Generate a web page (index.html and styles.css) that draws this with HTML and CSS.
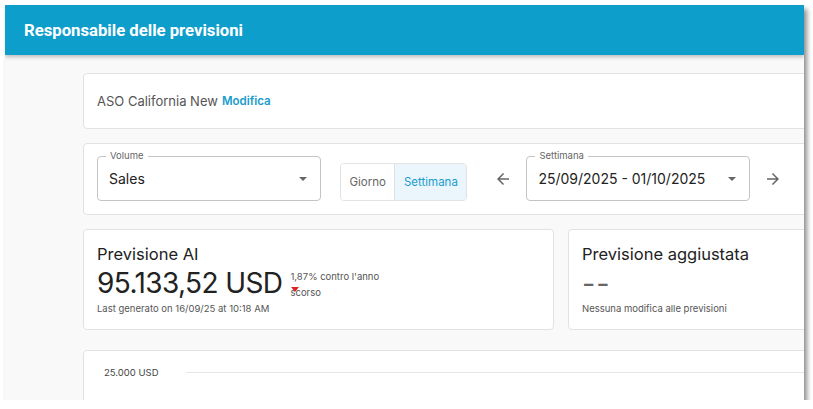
FILE: index.html
```html
<!DOCTYPE html>
<html lang="it">
  <head>
    <meta charset="UTF-8" />
    <meta name="viewport" content="width=device-width, initial-scale=1.0" />
    <title>Responsabile delle previsioni</title>
    <link rel="stylesheet" href="styles.css">
  </head>
  <body>
    <div class="window">
      <header>
        <h1>Responsabile delle previsioni</h1>
      </header>
      <div class="main">
        <div class="card app-card">
          <span class="app-name">ASO California New</span>
          <a class="edit-link" href="#">Modifica</a>
        </div>

        <div class="card filters">
          <div class="field">
            <span class="field-label">Volume</span>
            <span class="field-value">Sales</span>
            <span class="caret"></span>
          </div>
          <div class="toggle">
            <button class="toggle-btn">Giorno</button>
            <button class="toggle-btn active">Settimana</button>
          </div>
          <button class="arrow-btn">
            <svg width="18" height="18" viewBox="0 0 24 24"><path d="M20 11H7.83l5.59-5.59L12 4l-8 8 8 8 1.41-1.41L7.83 13H20v-2z" fill="#666"/></svg>
          </button>
          <div class="field">
            <span class="field-label">Settimana</span>
            <span class="field-value">25/09/2025 - 01/10/2025</span>
            <span class="caret"></span>
          </div>
          <button class="arrow-btn">
            <svg width="18" height="18" viewBox="0 0 24 24"><path d="M12 4l-1.41 1.41L16.17 11H4v2h12.17l-5.58 5.59L12 20l8-8z" fill="#666"/></svg>
          </button>
        </div>

        <div class="stats">
          <div class="card stat">
            <h2>Previsione AI</h2>
            <div class="stat-row">
              <span class="stat-value">95.133,52 USD</span>
              <span class="stat-change">
                1,87% contro l'anno scorso
                <span class="down"></span>
              </span>
            </div>
            <p class="stat-note">Last generato on 16/09/25 at 10:18 AM</p>
          </div>
          <div class="card stat">
            <h2>Previsione aggiustata</h2>
            <div class="stat-row">
              <span class="stat-empty">--</span>
            </div>
            <p class="stat-note">Nessuna modifica alle previsioni</p>
          </div>
        </div>

        <div class="card chart">
          <div class="grid-line">
            <span>25.000 USD</span>
            <div class="line"></div>
          </div>
        </div>
      </div>
    </div>
  </body>
</html>
```

FILE: styles.css
```css
body {
  margin: 0;
  padding: 0;
  background: #fff;
  font-family: Inter, "Noto Sans", sans-serif;
  color: #222;
}
.window {
  margin: 5px 0 0 5px;
  width: 799px;
  height: 395px;
  overflow: hidden;
  background: #f9f9f9;
  box-shadow: 3px 4px 5px rgba(0, 0, 0, 0.45);
}
header {
  height: 50px;
  background: #0e9ecb;
  display: flex;
  align-items: center;
  padding-left: 19px;
  box-shadow: 0 2px 4px rgba(0, 0, 0, 0.25);
  position: relative;
}
header h1 {
  margin: 0;
  color: #fff;
  font-family: Roboto, sans-serif;
  font-size: 16.7px;
  font-weight: 700;
}
.main {
  width: 956px;
  padding: 18px 0 0 78px;
  display: flex;
  flex-direction: column;
  gap: 14px;
}
.card {
  background: #fff;
  border: 1px solid #e2e2e2;
  border-radius: 4px;
  box-sizing: border-box;
}
.app-card {
  height: 56px;
  display: flex;
  align-items: center;
  padding-left: 13px;
  gap: 4px;
}
.app-name {
  font-size: 13px;
  color: #555;
}
.edit-link {
  font-size: 11.5px;
  font-weight: 600;
  color: #1a9ccc;
  text-decoration: none;
}
.filters {
  height: 72px;
  display: flex;
  align-items: flex-end;
  padding: 0 13px 13px;
}
.field {
  position: relative;
  width: 224px;
  height: 45px;
  border: 1px solid #c4c4c4;
  border-radius: 4px;
  box-sizing: border-box;
  display: flex;
  align-items: center;
  padding-left: 11px;
}
.field-label {
  position: absolute;
  top: -7px;
  left: 8px;
  padding: 0 4px;
  background: #fff;
  font-size: 9.5px;
  color: #666;
}
.field-value {
  font-size: 14px;
  color: #222;
}
.caret {
  position: absolute;
  right: 13px;
  top: 20px;
  border-left: 4px solid transparent;
  border-right: 4px solid transparent;
  border-top: 4px solid #666;
}
.toggle {
  display: flex;
  margin-left: 19px;
  border: 1px solid #e2e2e2;
  border-radius: 4px;
  overflow: hidden;
  height: 38px;
  box-sizing: border-box;
}
.toggle-btn {
  background: #fff;
  border: none;
  font-family: inherit;
  font-size: 11.5px;
  color: #666;
  padding: 0 8.5px;
}
.toggle-btn.active {
  background: #eaf6fc;
  color: #1a9ccc;
  border-left: 1px solid #e2e2e2;
}
.arrow-btn {
  background: none;
  border: none;
  padding: 0;
  width: 24px;
  height: 45px;
  display: flex;
  align-items: center;
  justify-content: center;
  margin: 0 11px 0 24px;
}
.arrow-btn:last-child {
  margin-left: 11px;
}
.stats {
  display: flex;
  gap: 14px;
}
.stat {
  width: 472px;
  height: 101px;
  padding: 13px 13px 0;
}
.stat h2 {
  margin: 0;
  font-size: 16.5px;
  font-weight: 400;
  color: #222;
  line-height: 22px;
}
.stat-row {
  display: flex;
  align-items: center;
  height: 36px;
  gap: 8px;
}
.stat-value {
  font-size: 28px;
  color: #222;
  letter-spacing: -0.6px;
}
.stat-change {
  position: relative;
  width: 100px;
  font-size: 9.5px;
  line-height: 16px;
  color: #555;
  margin-top: 4px;
}
.down {
  position: absolute;
  left: 1px;
  top: 18px;
  border-left: 4px solid transparent;
  border-right: 4px solid transparent;
  border-top: 5px solid #d9262b;
}
.stat-empty {
  font-size: 29px;
  color: #666;
  letter-spacing: 1px;
}
.stat-note {
  margin: 0;
  font-size: 9.5px;
  color: #555;
  line-height: 16px;
}
.chart {
  height: 80px;
  margin-top: 6px;
  padding: 16px 20px 0;
}
.grid-line {
  display: flex;
  align-items: center;
  gap: 28px;
  font-size: 9.5px;
  color: #444;
}
.line {
  flex: 1;
  border-top: 1px solid #e6e6e6;
}
```
